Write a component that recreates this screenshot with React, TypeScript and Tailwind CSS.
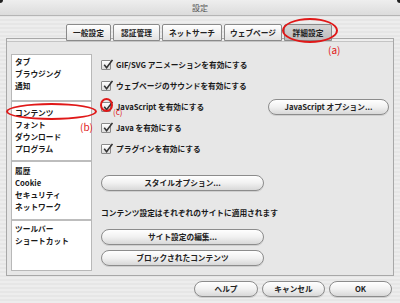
import React from "react";

const font = { fontFamily: '"Noto Sans CJK JP", "Noto Sans", sans-serif' };

function Check() {
  return (
    <div className="w-[10px] h-[10px] shrink-0 rounded-[1px] border border-[#8a8a8a] bg-gradient-to-b from-[#ffffff] to-[#dcdcdc] relative">
      <svg viewBox="0 0 10 10" className="absolute left-[0px] top-[-2px] w-[11px] h-[11px]">
        <path d="M2 5.2 L4.2 8 L9.5 0.8" fill="none" stroke="#333" strokeWidth="1.4" />
      </svg>
    </div>
  );
}

function Btn({ children, className = "" }: { children: React.ReactNode; className?: string }) {
  return (
    <div
      className={
        "h-[16px] rounded-full border border-[#8c8c8c] bg-gradient-to-b from-[#ffffff] via-[#f1f1f1] to-[#d8d8d8] flex items-center justify-center text-[7.7px] font-bold whitespace-nowrap text-[#222] shadow-[0_1px_0_#cfcfcf] " +
        className
      }
    >
      {children}
    </div>
  );
}

function Tab({ children, w, selected = false }: { children: React.ReactNode; w: string; selected?: boolean }) {
  return (
    <div
      className={
        "h-[17px] flex items-center justify-center text-[7.7px] font-bold whitespace-nowrap text-[#222] border border-[#8a8a8a] rounded-t-[2px] " +
        (selected ? "bg-gradient-to-b from-[#d6d6d6] to-[#bcbcbc] " : "bg-gradient-to-b from-[#ffffff] to-[#e2e2e2] ") +
        w
      }
    >
      {children}
    </div>
  );
}

function Row({ children, right }: { children: React.ReactNode; right?: React.ReactNode }) {
  return (
    <div className="h-[21px] flex items-center">
      <Check />
      <span className="ml-[5px] text-[7.7px] font-bold text-[#1a1a1a] whitespace-nowrap">{children}</span>
      {right}
    </div>
  );
}

function Section({ items, cls }: { items: string[]; cls: string }) {
  return (
    <div className={"pl-[3px] " + cls}>
      {items.map((t) => (
        <div key={t} className="h-[11.75px] leading-[11.75px] text-[7.7px] font-bold text-[#1a1a1a] whitespace-nowrap">
          {t}
        </div>
      ))}
    </div>
  );
}

export default function App() {
  return (
    <div
      style={font}
      className="w-[400px] h-[303px] relative overflow-hidden flex flex-col bg-[repeating-linear-gradient(0deg,#ededed_0px,#ededed_2px,#e6e6e6_2px,#e6e6e6_4px)]"
    >
      {/* title bar */}
      <div className="h-[16px] shrink-0 flex items-center justify-center bg-gradient-to-b from-[#eeeeee] to-[#dcdcdc] border-b border-[#b5b5b5] text-[8px] text-[#555]">
        設定
      </div>
      <div className="absolute left-0 top-0 w-[3px] h-[3px] bg-[#222] rounded-br-[3px]" />
      <div className="absolute right-0 top-0 w-[3px] h-[3px] bg-[#222] rounded-bl-[3px]" />

      {/* tabs */}
      <div className="mt-[8px] mb-[-3px] flex justify-center gap-[2px] relative z-10 pr-[2px]">
        <Tab w="w-[45px]">一般設定</Tab>
        <Tab w="w-[47px]">認証管理</Tab>
        <Tab w="w-[60px]">ネットサーチ</Tab>
        <Tab w="w-[58px]">ウェブページ</Tab>
        <Tab w="w-[48px]" selected>
          詳細設定
        </Tab>
      </div>

      {/* panel */}
      <div className="mx-[6px] h-[238px] shrink-0 border border-[#a8a8a8] bg-[#e7e7e7] flex flex-col">
        <div className="h-[3px] border-b border-[#c4c4c4] bg-[#eeeeee]" />
        <div className="flex pt-[12px] pl-[4px] pr-[4px]">
          {/* sidebar */}
          <div className="w-[81px] h-[217px] bg-white border border-[#b8b8b8] flex flex-col">
            <Section items={["タブ", "ブラウジング", "通知"]} cls="pt-[1px] pb-[9px] border-b-2 border-[#bdbdbd]" />
            <Section items={["コンテンツ", "フォント", "ダウンロード", "プログラム"]} cls="pt-[5px] pb-[6px] border-b-2 border-[#bdbdbd]" />
            <Section items={["履歴", "Cookie", "セキュリティ", "ネットワーク"]} cls="pt-[3px] pb-[7px] border-b-2 border-[#bdbdbd]" />
            <Section items={["ツールバー", "ショートカット"]} cls="pt-[2px]" />
          </div>

          {/* content */}
          <div className="ml-[9px] flex-1 flex flex-col">
            <Row>GIF/SVG アニメーションを有効にする</Row>
            <Row>ウェブページのサウンドを有効にする</Row>
            <Row right={<Btn className="ml-auto w-[121px]">JavaScript オプション...</Btn>}>JavaScript を有効にする</Row>
            <Row>Java を有効にする</Row>
            <Row>プラグインを有効にする</Row>

            <Btn className="mt-[16px] w-[163px]">スタイルオプション...</Btn>
            <div className="mt-[16px] text-[7.7px] font-bold leading-[12px] text-[#1a1a1a] whitespace-nowrap">
              コンテンツ設定はそれぞれのサイトに適用されます
            </div>
            <Btn className="mt-[10px] w-[163px]">サイト設定の編集...</Btn>
            <Btn className="mt-[5px] w-[163px]">ブロックされたコンテンツ</Btn>
          </div>
        </div>
      </div>

      {/* bottom buttons */}
      <div className="mt-[5px] flex justify-end pr-[8px] gap-[4px]">
        <Btn className="w-[64px]">ヘルプ</Btn>
        <Btn className="w-[63px]">キャンセル</Btn>
        <Btn className="w-[63px]">OK</Btn>
      </div>

      {/* annotations */}
      <div className="absolute left-[282px] top-[18px] w-[56px] h-[25px] rounded-[50%] border-2 border-[#e01818] z-20" />
      <div className="absolute left-[328px] top-[44px] text-[10px] leading-[12px] text-[#e01818] z-20">(a)</div>
      <div className="absolute left-[6px] top-[103px] w-[91px] h-[17px] rounded-[50%] border-2 border-[#e01818] z-20" />
      <div className="absolute left-[80px] top-[121px] text-[10px] leading-[12px] text-[#e01818] z-20">(b)</div>
      <div className="absolute left-[100px] top-[98px] w-[13px] h-[14px] rounded-[50%] border-2 border-[#e01818] z-20" />
      <div className="absolute left-[113px] top-[107px] text-[8px] leading-[9px] text-[#e01818] z-20">(c)</div>
    </div>
  );
}
